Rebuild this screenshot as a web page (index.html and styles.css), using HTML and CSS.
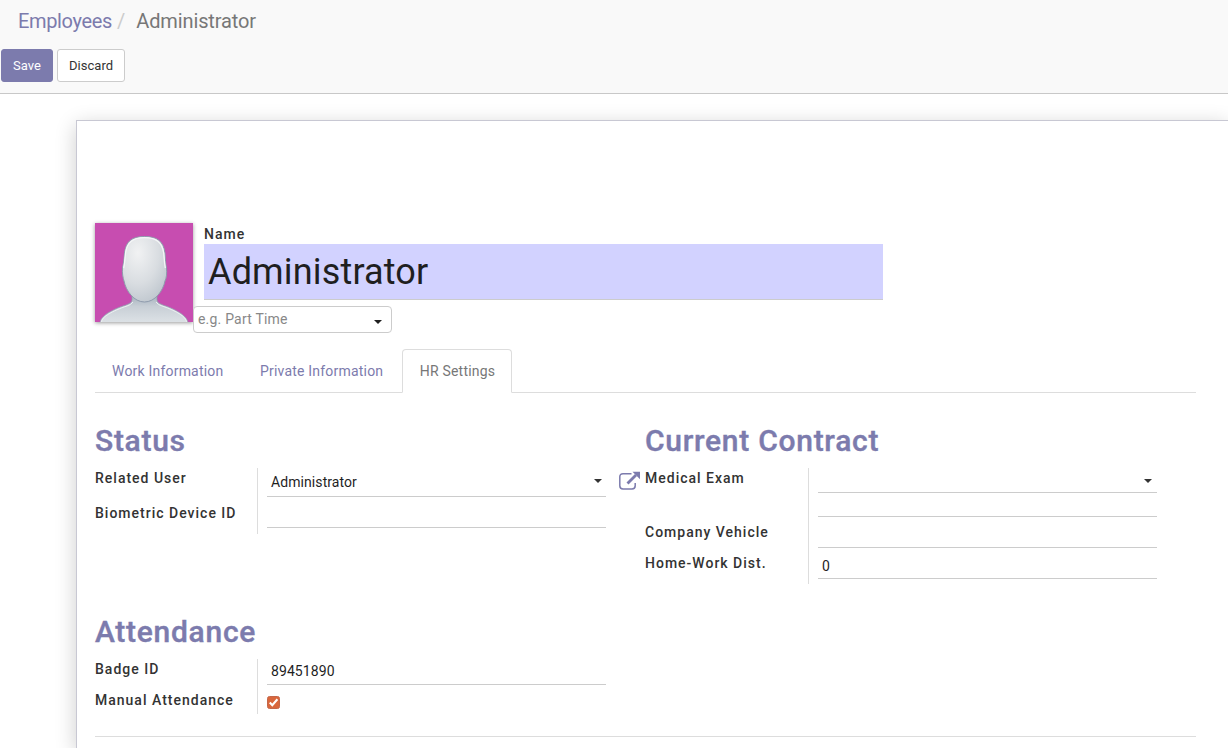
FILE: index.html
```html
<!DOCTYPE html>
<html lang="en">
<head>
<meta charset="utf-8">
<title>Administrator - Employees</title>
<link rel="stylesheet" href="styles.css">
</head>
<body>
<header class="control-panel">
  <nav class="breadcrumb"><a class="crumb-link">Employees</a><span class="crumb-sep">/</span><span class="crumb-active">Administrator</span></nav>
  <div class="actions"><button class="btn btn-primary">Save</button><button class="btn btn-default">Discard</button></div>
</header>
<main class="sheet">
  <section class="identity">
    <svg class="avatar" width="98" height="99" viewBox="0 0 98 99">
      <defs>
        <radialGradient id="face" cx="35%" cy="25%" r="85%"><stop offset="0" stop-color="#f1f2f3"/><stop offset=".55" stop-color="#d9dde1"/><stop offset="1" stop-color="#bcc4cc"/></radialGradient>
        <linearGradient id="body" x1="0" y1="0" x2="0" y2="1"><stop offset="0" stop-color="#9eacb9"/><stop offset=".45" stop-color="#c8cfd6"/><stop offset="1" stop-color="#dde2e6"/></linearGradient>
      </defs>
      <rect width="98" height="99" fill="#c74db0"/>
      <path d="M5 100C5 94 15 87 31 82Q37 80 37 77V70H62V77Q62 80 68 82C83 87 93 94 93 100Z" fill="url(#body)" stroke="#8e9bad" stroke-width=".7"/>
      <path d="M6.500 99C7 94 17 88 32 83Q36 82 38 79M91.500 99C91 94 82 88 67 83Q63 82 61 79" fill="none" stroke="#eceff1" stroke-width="1"/>
      <path d="M49.500 13.500C37 13.500 31 18 29.500 30C29 36 28.500 41 27.500 45C27 50 28 55 29 58C31 68 39 79 49.500 79C60 79 68 68 70 58C71.500 55 72 50 71.500 45C70.500 41 70.500 36 70 30C68.500 18 62 13.500 49.500 13.500Z" fill="url(#face)" stroke="#8e9bad" stroke-width="1"/>
      <path d="M49.500 14.700C38 14.700 32 19 30.500 30C30 36 29.500 41 28.700 45M49.500 14.700C61 14.700 67 19 68.700 30C69.200 36 69.700 41 70.300 45" fill="none" stroke="#f5f6f7" stroke-width="1.300"/>
    </svg>
    <div class="identity-fields">
      <label class="label name-label">Name</label>
      <div class="name-input">Administrator</div>
      <div class="tag-select"><span>e.g. Part Time</span><svg class="caret" width="8" height="4" viewBox="0 0 8 4"><path d="M0 0H8L4 4Z" fill="#1f1f1f"/></svg></div>
    </div>
  </section>
  <nav class="tabs"><a class="tab tab-work">Work Information</a><a class="tab tab-private">Private Information</a><a class="tab tab-active">HR Settings</a></nav>
  <div class="groups">
    <section class="group">
      <h2 class="title">Status</h2>
      <div class="fields">
        <div class="labels"><label class="label row-35">Related User</label><label class="label">Biometric Device ID</label></div>
        <div class="inputs">
          <div class="with-link"><div class="input input-user"><span>Administrator</span><svg class="caret" width="8" height="4" viewBox="0 0 8 4"><path d="M0 0H8L4 4Z" fill="#333"/></svg></div>
            <svg class="external" width="21" height="19" viewBox="0 0 21 19" fill="none" stroke="#7c7bad"><path d="M12.500 2.700H4Q.8 2.700 .8 5.700V14.700Q.8 17.900 4 17.900H13Q16.200 17.900 16.200 14.700V12" stroke-width="1.500"/><path d="M8.500 12.500L17 4" stroke-width="2.800"/><path d="M13.500 .8H21V8.300Z" fill="#7c7bad" stroke="none"/></svg></div>
          <div class="input row-31"></div>
        </div>
      </div>
    </section>
    <section class="group">
      <h2 class="title">Current Contract</h2>
      <div class="fields">
        <div class="labels"><label class="label row-54">Medical Exam</label><label class="label row-31">Company Vehicle</label><label class="label">Home-Work Dist.</label></div>
        <div class="inputs inputs-contract">
          <div class="input input-exam"><svg class="caret" width="8" height="4" viewBox="0 0 8 4"><path d="M0 0H8L4 4Z" fill="#333"/></svg></div>
          <div class="input row-24"></div>
          <div class="input row-31"></div>
          <div class="input row-31 value">0</div>
        </div>
      </div>
    </section>
    <section class="group">
      <h2 class="title">Attendance</h2>
      <div class="fields">
        <div class="labels"><label class="label row-31">Badge ID</label><label class="label">Manual Attendance</label></div>
        <div class="inputs inputs-attendance">
          <div class="input input-badge">89451890</div>
          <svg class="checkbox" width="13" height="13" viewBox="0 0 13 13"><rect x=".5" y=".5" width="12" height="12" rx="2" fill="#d9673c" stroke="#c4674a"/><path d="M2.800 6.500L5.300 9.200L10.400 3.200" fill="none" stroke="#fff" stroke-width="2.100"/></svg>
        </div>
      </div>
    </section>
  </div>
  <hr class="divider">
</main>
</body>
</html>
```
FILE: styles.css
```css
* { box-sizing: border-box; }
body { margin: 0; height: 748px; overflow: hidden; background: #fff; color: #1f1f1f; font: 14px/20px Roboto, "Liberation Sans", sans-serif; }
.control-panel { position: relative; z-index: 1; height: 94px; background: #f9f9f9; border-bottom: 1px solid #c8c8c8; }
.breadcrumb { height: 49px; padding: 7px 0 0 18px; font-size: 20px; line-height: 28px; white-space: nowrap; }
.crumb-link { color: #7c7bad; letter-spacing: -.35px; }
.crumb-sep { color: #ccc; padding: 0 11px 0 5px; }
.crumb-active { color: #777; letter-spacing: -.12px; }
.actions { display: flex; gap: 4px; padding-left: 1px; }
.btn { height: 33px; padding: 0; border-radius: 3px; font: 13px/18px Roboto, sans-serif; }
.btn-primary { width: 52px; background: #7c7bad; border: 1px solid #7c7bad; color: #fff; }
.btn-default { width: 68px; background: #fff; border: 1px solid #ccc; color: #333; letter-spacing: .04px; }
.sheet { height: 628px; margin: 26px 0 0 76px; padding: 102px 0 0 18px; background: #fff; border: 1px solid #c8c8d3; border-width: 1px 0 0 1px; box-shadow: 0 5px 20px rgba(0,0,0,.2); }
.identity { display: flex; height: 126px; }
.avatar { display: block; flex: none; box-shadow: 0 1px 4px rgba(0,0,0,.4); }
.identity-fields { display: flex; flex-direction: column; }
.label { display: block; height: 20px; font-weight: 500; letter-spacing: 1px; color: #333; white-space: nowrap; }
.name-label { height: 21px; line-height: 23px; margin-left: 11px; }
.name-input { width: 679px; height: 56px; margin-left: 11px; padding-left: 4px; background: #d2d2ff; border-bottom: 1px solid #ccc; font-size: 36px; line-height: 56px; letter-spacing: .16px; }
.tag-select { display: flex; justify-content: space-between; width: 199px; height: 27px; margin-top: 6px; padding: 0 9px 0 4px; border: 1px solid #ccc; border-radius: 4px; background: #fff; color: #888; line-height: 25px; letter-spacing: .2px; }
.tag-select .caret { margin-top: 13px; }
.tabs { display: flex; width: 1101px; height: 44px; border-bottom: 1px solid #ddd; color: #7c7bad; line-height: 44px; letter-spacing: .2px; white-space: nowrap; }
.tab { height: 44px; }
.tab-work { width: 165px; padding-left: 17px; }
.tab-private { width: 142px; }
.tab-active { width: 110px; padding-left: 1px; line-height: 42px; border: 1px solid #ddd; border-bottom-color: #fff; border-radius: 4px 4px 0 0; background: #fff; color: #777; text-align: center; }
.groups { display: grid; grid-template-columns: 550px 551px; grid-template-rows: 191px 152px; }
.title { margin: 0; height: 75px; padding-top: 28px; font-size: 30px; line-height: 40px; font-weight: 500; letter-spacing: .72px; color: #7c7bad; -webkit-text-stroke: .4px #7c7bad; white-space: nowrap; }
.fields { display: flex; }
.labels { width: 162px; }
.row-35 { height: 35px; }
.row-54 { height: 54px; }
.row-31 { height: 31px; }
.row-24 { height: 24px; }
.inputs { height: 66px; border-left: 1px solid #ddd; padding-left: 9px; }
.inputs-contract { margin-left: 1px; height: 116px; }
.inputs-attendance { height: 55px; }
.input { width: 339px; border-bottom: 1px solid #ccc; padding-left: 4px; letter-spacing: .08px; }
.input-user { display: flex; justify-content: space-between; height: 29px; padding-right: 4px; line-height: 28px; }
.input-user .caret { margin-top: 11px; }
.with-link { display: flex; }
.external { margin: 3px 0 0 13px; }
.input-exam { display: flex; justify-content: flex-end; height: 25px; padding: 11px 5px 0 0; }
.value { line-height: 36px; }
.input-badge { height: 26px; line-height: 24px; }
.checkbox { display: block; margin: 11px 0 0 0; }
.divider { width: 1101px; margin: 0; border: 0; border-top: 1px solid #ddd; }
```
